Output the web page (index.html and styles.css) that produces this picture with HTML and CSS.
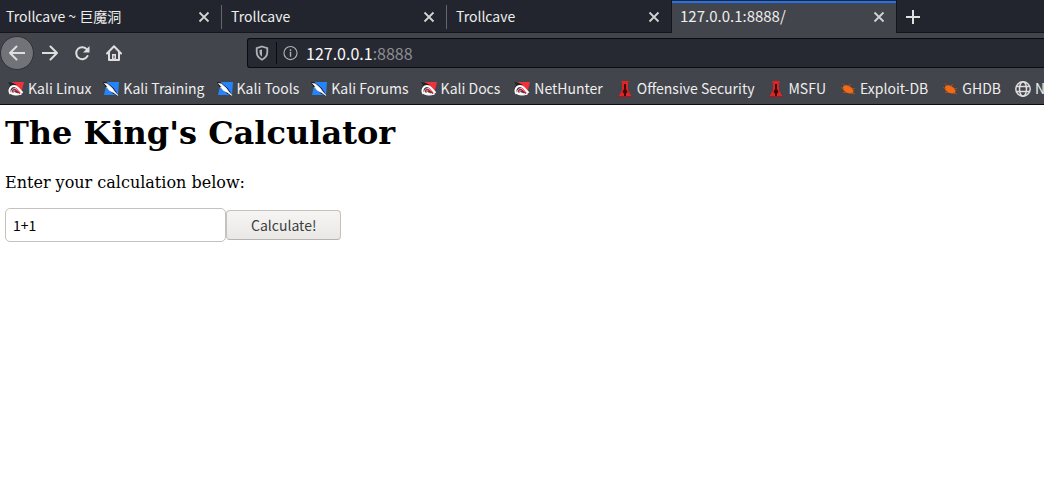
FILE: index.html
```html
<!DOCTYPE html>
<html lang="en">
<head>
<meta charset="utf-8">
<title>127.0.0.1:8888/</title>
<link rel="stylesheet" href="styles.css">
</head>
<body>
<svg class="defs" aria-hidden="true">
  <defs>
    <symbol id="close" viewBox="0 0 12 12"><path d="M1.500 1.500l9 9M10.500 1.500l-9 9" fill="none" stroke="#d3d3d4" stroke-width="1.800"/></symbol>
    <symbol id="dragon-red" viewBox="0 0 16 16">
      <path d="M4 1h12l-3 12-7-8z" fill="#f0323c"/><path d="M0 1l5 1 4 2-4 2-4 4-1-2 2-4z" fill="#222329"/>
      <path d="M2.500 13C0 9 2.500 5 6 5c2 0 3 1 4 2l4.500 5" fill="none" stroke="#fff" stroke-width="2"/>
      <path d="M2.500 12.500c3 2 7 2 11 .5-3-.5-5 0-7-1.500-1.500-1.500-.5-3 1.500-2.500l5 3.500-5-4.500c-3-1-5 2-4 3z" fill="#fff" stroke="#fff"/>
      <path d="M12 12.500C9 10 8 8.500 6.500 8.500c-2 0-2.500 2-1 3" fill="none" stroke="#b51e35" stroke-width="1.500"/>
    </symbol>
    <symbol id="dragon-blue" viewBox="0 0 16 16">
      <path d="M4 1h12l-1 13H1z" fill="#2584fb"/><path d="M0 1l4 .5 7 6 5 8-6-3-8-7z" fill="#17181c"/>
      <path d="M1.500 2.500l3 .5 5 4.500 2 3 3.500 4-4.500-3-4-2-3-3.500 1.500.3z" fill="#fff" stroke="#fff" stroke-width=".7"/>
    </symbol>
    <symbol id="tower" viewBox="0 0 16 16">
      <path d="M4 0h8l-1 2v7l3.500 6.500h-13L5 9V2z" fill="#e02424"/><path d="M7 3h2v5l1.500 3L9 12.500V15H7v-2.500L5.500 11 7 8z" fill="#3c0808"/><path d="M1.500 15.500h13" stroke="#a9151a"/>
    </symbol>
    <symbol id="bug" viewBox="0 0 16 16">
      <path d="M3 5.500l3-1.500 3 1 3 2 1.500 2.500-.5 2.500-3 .5-4-1-3-3z" fill="#f26a12"/><path d="M5 5L3 2.500M8 5l3-1.500M4 8L1 6.500M6 11l-3 .5M12 8l3-.5M11 12l4 1" stroke="#b64c1b" fill="none"/>
    </symbol>
  </defs>
</svg>
<header class="browser">
  <nav class="tabs" aria-label="Tabs">
    <div class="tab"><span class="tab-title">Trollcave ~ 巨魔洞</span><button class="close" aria-label="Close tab"><svg><use href="#close"/></svg></button></div>
    <div class="tab"><span class="tab-title">Trollcave</span><button class="close" aria-label="Close tab"><svg><use href="#close"/></svg></button></div>
    <div class="tab last"><span class="tab-title">Trollcave</span><button class="close" aria-label="Close tab"><svg><use href="#close"/></svg></button></div>
    <div class="tab active"><span class="tab-title">127.0.0.1:8888/</span><button class="close" aria-label="Close tab"><svg><use href="#close"/></svg></button></div>
    <button class="new-tab" aria-label="New tab"><svg viewBox="0 0 14 14"><path d="M7 0v14M0 7h14" stroke="#e0e0e1" stroke-width="2"/></svg></button>
  </nav>
  <div class="toolbar">
    <button class="tool back" aria-label="Back"><svg viewBox="0 0 16 16"><path d="M15.500 8H1M7.500 1.500L1 8l6.500 6.500"/></svg></button>
    <button class="tool" aria-label="Forward"><svg viewBox="0 0 16 16"><path d="M.5 8H15M8.500 1.500L15 8l-6.500 6.500"/></svg></button>
    <button class="tool" aria-label="Reload"><svg viewBox="0 0 16 16"><path d="M13.500 11A6 6 0 1 1 13 4.500"/><path d="M15.500 1v6.500H9z" class="solid"/></svg></button>
    <button class="tool" aria-label="Home"><svg viewBox="0 0 16 16"><path d="M1 8.500L8 1.200l7 7.300M3 7v8h10V7"/><path d="M6 9h4v6H6z" class="solid"/><path d="M8 11v2" class="hole"/></svg></button>
    <div class="address">
      <svg class="shield" viewBox="0 0 14 16"><path d="M7 1.500l5.300 1.700V7c0 3.500-2 6-5.300 7.700C3.700 13 1.700 10.500 1.700 7V3.200z" fill="none" stroke="#b1b2b6" stroke-width="1.800"/><path d="M7 4.500v7.300C5.300 10.500 4.500 9 4.500 7V5z" fill="#b1b2b6"/></svg>
      <svg class="info" viewBox="0 0 16 16"><circle cx="8" cy="8" r="7" fill="none" stroke="#b1b2b6" stroke-width="1.200"/><path d="M8 7v5M8 4v2" stroke="#b1b2b6" stroke-width="1.500"/></svg>
      <span class="url">127.0.0.1<span class="port">:8888</span></span>
    </div>
  </div>
  <nav class="bookmarks" aria-label="Bookmarks">
    <a href="#"><svg><use href="#dragon-red"/></svg>Kali Linux</a>
    <a href="#"><svg><use href="#dragon-blue"/></svg>Kali Training</a>
    <a href="#"><svg><use href="#dragon-blue"/></svg>Kali Tools</a>
    <a href="#"><svg><use href="#dragon-blue"/></svg>Kali Forums</a>
    <a href="#"><svg><use href="#dragon-red"/></svg>Kali Docs</a>
    <a class="spaced" href="#"><svg><use href="#dragon-red"/></svg>NetHunter</a>
    <a class="spaced" href="#"><svg><use href="#tower"/></svg>Offensive Security</a>
    <a class="spaced" href="#"><svg><use href="#tower"/></svg>MSFU</a>
    <a class="spaced" href="#"><svg><use href="#bug"/></svg>Exploit-DB</a>
    <a class="spaced" href="#"><svg><use href="#bug"/></svg>GHDB</a>
    <a class="spaced" href="#"><svg viewBox="0 0 16 16"><g fill="none" stroke="#dededf" stroke-width="1.500"><circle cx="8" cy="8" r="7.200"/><ellipse cx="8" cy="8" rx="3.500" ry="7.200"/><path d="M1.500 5.500h13M1.500 10.500h13"/></g></svg>N</a>
  </nav>
</header>
<main class="page">
  <h1>The King's Calculator</h1>
  <form>
    <label class="prompt" for="calculation">Enter your calculation below:</label>
    <div class="entry">
      <input class="field" id="calculation" type="text" value="1+1">
      <button class="submit" type="button">Calculate!</button>
    </div>
  </form>
</main>
</body>
</html>
```
FILE: styles.css
```css
* { box-sizing: border-box; }
body { margin: 0; background: #fff; color: #000; font: 16px/20px "DejaVu Serif", serif; }
button { margin: 0; padding: 0; border: 0; background: none; font: inherit; }
svg { display: block; flex: none; }
.defs { position: absolute; width: 0; height: 0; }
.browser { overflow: hidden; background: #43454c; border-bottom: 1px solid #0c0c0d; color: #eeeeec; font: 14px/20px "Noto Sans CJK SC", sans-serif; }
.tabs { display: flex; height: 33px; background: #23252e; box-shadow: inset 0 -1px #15161b; }
.tab { display: flex; flex: 0 0 225px; align-items: center; justify-content: space-between; padding: 0 12px 1px 9px; background: linear-gradient(#65676c, #65676c) right center / 1px 24px no-repeat; }
.tab:first-child { flex-basis: 222px; padding-left: 6px; }
.tab.last { background: linear-gradient(#15161b, #15161b) right / 1px 100% no-repeat; }
.tab.active { flex-basis: 224px; background: #43454c; border-top: 1px solid #23252e; box-shadow: inset 0 2px #2473ee; padding: 0 11px 2px 8px; font-size: 15px; }
.close svg { width: 12px; height: 12px; margin-top: 1px; }
.new-tab { padding: 0 9px; border-left: 1px solid #15161b; }
.new-tab svg { width: 14px; height: 14px; }
.toolbar { display: flex; align-items: center; height: 40px; }
.tool { display: grid; flex: none; width: 32px; height: 32px; place-items: center; }
.tool svg { width: 16px; height: 16px; fill: none; stroke: #dededf; stroke-width: 2; stroke-linecap: round; stroke-linejoin: round; }
.tool .solid { fill: #dededf; stroke: none; }
.tool .hole { stroke: #43454c; stroke-width: 1; }
.tool.back { width: 34px; height: 34px; border: 1px solid #303138; border-radius: 50%; background: #727378; }
.address { display: flex; flex: 1; align-items: center; height: 30px; margin-left: 117px; padding-left: 7px; border: 1px solid #0c0c0d; border-right: 0; border-radius: 3px 0 0 3px; background: #272932; }
.shield { width: 14px; height: 16px; }
.info { width: 22px; height: 22px; padding: 3px 0 3px 6px; margin-left: 7px; border-left: 1px solid #0c0c0d; }
.url { font-size: 16px; color: #f9f9fa; margin-left: 8px; }
.port { color: #8d8e92; }
.bookmarks { display: flex; align-items: center; gap: 12px; height: 31px; padding: 0 0 1px 8px; }
.bookmarks a { display: flex; flex: none; align-items: center; gap: 4px; color: inherit; text-decoration: none; white-space: nowrap; }
.bookmarks .spaced { margin-left: 2px; }
.bookmarks svg { width: 16px; height: 16px; margin-top: 2px; }
.page { padding: 8px 5px; }
h1 { margin: 0 0 20px; font-size: 32px; line-height: 40px; }
.prompt { display: block; margin-bottom: 15px; }
.entry { display: flex; align-items: center; }
.field { width: 221px; height: 34px; margin: 0; padding: 0 7px; border: 1px solid #c6c1bc; border-radius: 5px; background: #fff; color: #000; font: 14px/20px "Noto Sans CJK SC", sans-serif; }
.submit { height: 30px; padding: 0 24px; border: 1px solid #c6c1bc; border-bottom-color: #b8b2ac; border-radius: 4px; background: linear-gradient(#f6f5f4, #eae8e7); color: #3d3d3d; font: 14px/20px "Noto Sans CJK SC", sans-serif; }
```
